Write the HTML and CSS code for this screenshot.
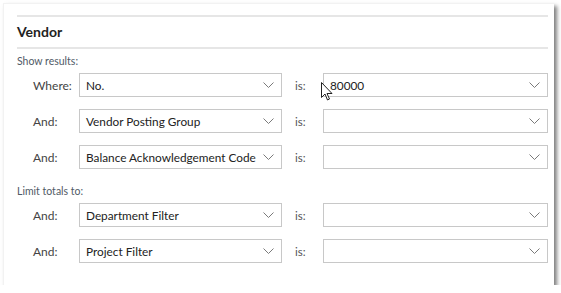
FILE: index.html
```html
<!DOCTYPE html>
<html lang="en">
<head>
  <meta charset="UTF-8">
  <title>Vendor filters</title>
  <link rel="stylesheet" href="styles.css">
</head>
<body>

  <div class="panel">
    <div class="rule"></div>
    <h3>Vendor</h3>
    <div class="rule"></div>

    <!-- Show results -->
    <div class="group-title">Show results:</div>
    <div class="filter-row">
      <label>Where:</label>
      <div class="select"><span>No.</span><svg class="chev" width="11" height="6" viewBox="0 0 11 6"><polyline points="0.5,0.5 5.5,5.5 10.5,0.5"/></svg></div>
      <span class="is">is:</span>
      <div class="select value"><span>80000</span><svg class="chev" width="11" height="6" viewBox="0 0 11 6"><polyline points="0.5,0.5 5.5,5.5 10.5,0.5"/></svg></div>
    </div>
    <div class="filter-row">
      <label>And:</label>
      <div class="select"><span>Vendor Posting Group</span><svg class="chev" width="11" height="6" viewBox="0 0 11 6"><polyline points="0.5,0.5 5.5,5.5 10.5,0.5"/></svg></div>
      <span class="is">is:</span>
      <div class="select value"><span></span><svg class="chev" width="11" height="6" viewBox="0 0 11 6"><polyline points="0.5,0.5 5.5,5.5 10.5,0.5"/></svg></div>
    </div>
    <div class="filter-row">
      <label>And:</label>
      <div class="select"><span>Balance Acknowledgement Code</span><svg class="chev" width="11" height="6" viewBox="0 0 11 6"><polyline points="0.5,0.5 5.5,5.5 10.5,0.5"/></svg></div>
      <span class="is">is:</span>
      <div class="select value"><span></span><svg class="chev" width="11" height="6" viewBox="0 0 11 6"><polyline points="0.5,0.5 5.5,5.5 10.5,0.5"/></svg></div>
    </div>

    <!-- Limit totals -->
    <div class="group-title second">Limit totals to:</div>
    <div class="filter-row">
      <label>And:</label>
      <div class="select"><span>Department Filter</span><svg class="chev" width="11" height="6" viewBox="0 0 11 6"><polyline points="0.5,0.5 5.5,5.5 10.5,0.5"/></svg></div>
      <span class="is">is:</span>
      <div class="select value"><span></span><svg class="chev" width="11" height="6" viewBox="0 0 11 6"><polyline points="0.5,0.5 5.5,5.5 10.5,0.5"/></svg></div>
    </div>
    <div class="filter-row">
      <label>And:</label>
      <div class="select"><span>Project Filter</span><svg class="chev" width="11" height="6" viewBox="0 0 11 6"><polyline points="0.5,0.5 5.5,5.5 10.5,0.5"/></svg></div>
      <span class="is">is:</span>
      <div class="select value"><span></span><svg class="chev" width="11" height="6" viewBox="0 0 11 6"><polyline points="0.5,0.5 5.5,5.5 10.5,0.5"/></svg></div>
    </div>

    <!-- mouse pointer -->
    <svg class="cursor" width="12" height="19" viewBox="0 0 12 19">
      <path d="M0.5,0.5 L0.5,15.5 L4,12 L6.5,18 L8.5,17 L6,11.5 L11,11.5 Z"/>
    </svg>
  </div>

</body>
</html>
```

FILE: styles.css
```css
body {
  margin: 0;
  background: #fff;
  font-family: Lato, "Liberation Sans", sans-serif;
  color: #333;
}
.panel {
  position: relative;
  box-sizing: border-box;
  margin: 3px 0 0 3px;
  width: 551px;
  height: 282px;
  padding: 11px 6px 0 13px;
  background: #fff;
  border-left: 1px solid #f2f2f2;
  border-top: 1px solid #f2f2f2;
  box-shadow: 3px 3px 4px rgba(0, 0, 0, 0.5);
}
.rule {
  height: 2px;
  background: #e6e6e6;
}
h3 {
  margin: 0;
  height: 30px;
  line-height: 30px;
  font-size: 14px;
  font-weight: 700;
  color: #222;
}
.group-title {
  margin-top: 2px;
  height: 20px;
  line-height: 20px;
  font-size: 10.5px;
  color: #505a66;
}
.group-title.second {
  margin-top: 0;
}
.filter-row {
  display: grid;
  grid-template-columns: 46px 203px 41px 225px;
  align-items: center;
  height: 24px;
  margin: 2px 0 12px 16px;
}
.filter-row label {
  font-size: 12px;
  color: #444;
}
.is {
  padding-left: 13px;
  font-size: 11.5px;
  color: #555;
}
.select {
  box-sizing: border-box;
  height: 24px;
  display: flex;
  align-items: center;
  justify-content: space-between;
  padding: 0 7px 0 6px;
  border: 1px solid #c8c8c8;
  font-size: 11.8px;
  color: #222;
  white-space: nowrap;
}
.chev {
  fill: none;
  stroke: #7a7a7a;
  stroke-width: 1;
}
.cursor {
  position: absolute;
  left: 317px;
  top: 78px;
  fill: #fff;
  stroke: #222;
  stroke-width: 1;
}
```
